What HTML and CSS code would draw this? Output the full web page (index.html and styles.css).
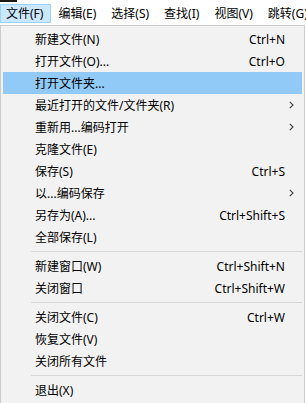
FILE: index.html
```html
<!DOCTYPE html>
<html>
<head>
    <meta charset="utf8"/>
    <link rel="stylesheet" href="styles.css">
</head>
<body>
<div class="topline"><span></span></div>
<div class="menubar">
    <span class="mb-item active">文件(F)</span>
    <span class="mb-item">编辑(E)</span>
    <span class="mb-item">选择(S)</span>
    <span class="mb-item">查找(I)</span>
    <span class="mb-item">视图(V)</span>
    <span class="mb-item">跳转(G)</span>
</div>
<div class="dropdown">
    <div class="row"><span class="label">新建文件(N)</span><span class="key">Ctrl+N</span></div>
    <div class="row"><span class="label">打开文件(O)...</span><span class="key">Ctrl+O</span></div>
    <div class="row hover"><span class="label">打开文件夹...</span></div>
    <div class="row"><span class="label">最近打开的文件/文件夹(R)</span><span class="arrow"><svg width="5" height="8" viewBox="0 0 5 8"><path d="M0.8 0.8 L4 4 L0.8 7.2" fill="none" stroke="#404040" stroke-width="1.1"/></svg></span></div>
    <div class="row"><span class="label">重新用...编码打开</span><span class="arrow"><svg width="5" height="8" viewBox="0 0 5 8"><path d="M0.8 0.8 L4 4 L0.8 7.2" fill="none" stroke="#404040" stroke-width="1.1"/></svg></span></div>
    <div class="row"><span class="label">克隆文件(E)</span></div>
    <div class="row"><span class="label">保存(S)</span><span class="key">Ctrl+S</span></div>
    <div class="row"><span class="label">以...编码保存</span><span class="arrow"><svg width="5" height="8" viewBox="0 0 5 8"><path d="M0.8 0.8 L4 4 L0.8 7.2" fill="none" stroke="#404040" stroke-width="1.1"/></svg></span></div>
    <div class="row"><span class="label">另存为(A)...</span><span class="key">Ctrl+Shift+S</span></div>
    <div class="row"><span class="label">全部保存(L)</span></div>
    <div class="sep"></div>
    <div class="row"><span class="label">新建窗口(W)</span><span class="key">Ctrl+Shift+N</span></div>
    <div class="row"><span class="label">关闭窗口</span><span class="key">Ctrl+Shift+W</span></div>
    <div class="sep"></div>
    <div class="row"><span class="label">关闭文件(C)</span><span class="key">Ctrl+W</span></div>
    <div class="row"><span class="label">恢复文件(V)</span></div>
    <div class="row"><span class="label">关闭所有文件</span></div>
    <div class="sep"></div>
    <div class="row"><span class="label">退出(X)</span></div>
</div>
</body>
</html>
```

FILE: styles.css
```css
html, body {
    margin: 0;
    padding: 0;
    background: #ffffff;
    overflow: hidden;
}

body {
    width: 306px;
    height: 403px;
    font-family: "Noto Sans", "Noto Sans CJK SC", sans-serif;
    font-size: 12px;
    color: #000;
}

.topline {
    height: 2px;
}

.topline span {
    display: block;
    width: 17px;
    height: 2px;
    background: #1a1a1a;
}

.menubar {
    display: flex;
    height: 21px;
    padding-top: 2px;
    white-space: nowrap;
    overflow: hidden;
}

.mb-item {
    display: flex;
    align-items: center;
    height: 19px;
    padding: 0 7px 0 5px;
    margin-right: 1px;
    border: 1px solid transparent;
    box-sizing: border-box;
    line-height: 19px;
    flex-shrink: 0;
}

.mb-item.active {
    background: #cce8ff;
    border-color: #99d1ff;
}

.dropdown {
    width: 305px;
    box-sizing: border-box;
    border: 1px solid #cccccc;
    background: #f2f2f2;
    padding: 2px;
}

.row {
    display: flex;
    align-items: center;
    height: 22px;
    padding: 0 9px 0 32px;
    white-space: nowrap;
}

.row.hover {
    background: #91c9f7;
}

.label {
    flex: 1;
}

.key {
    margin-right: 8px;
}

.arrow {
    display: flex;
    align-items: center;
    margin-right: -1px;
}

.sep {
    height: 7px;
    display: flex;
    align-items: center;
    padding-left: 28px;
}

.sep::after {
    content: "";
    display: block;
    flex: 1;
    height: 1px;
    background: #d7d7d7;
}
```
